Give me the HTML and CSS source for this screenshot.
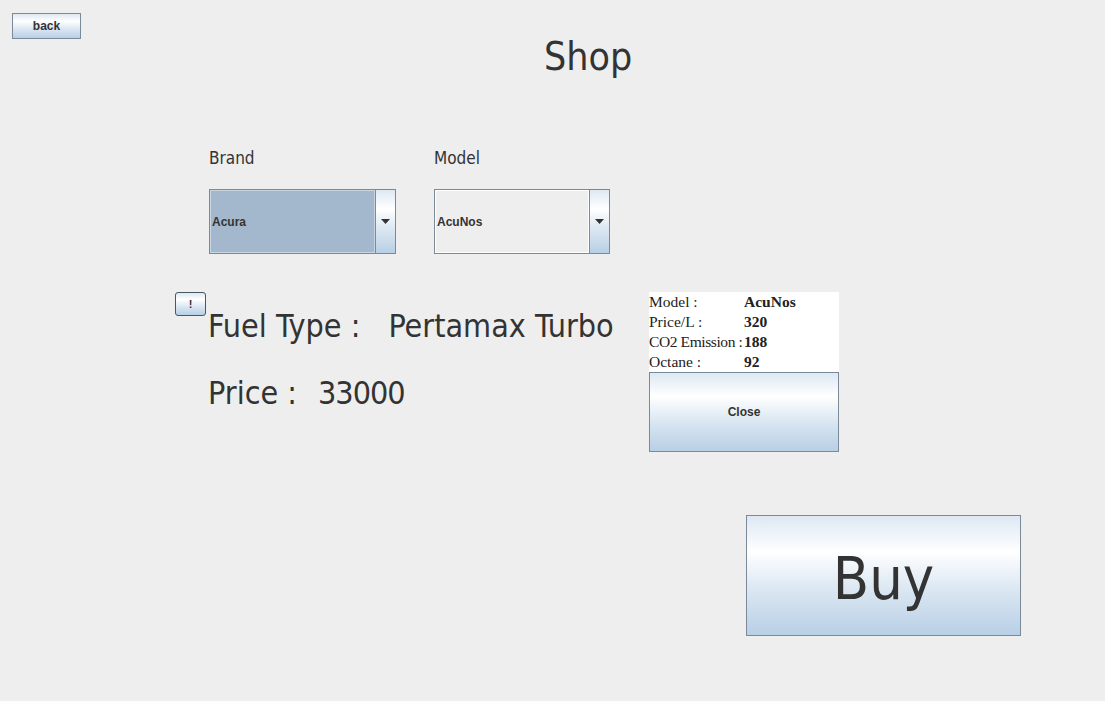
FILE: index.html
```html
<!DOCTYPE html>
<html lang="en">
<head>
<meta charset="utf-8">
<title>Shop</title>
<link rel="stylesheet" href="styles.css">
</head>
<body>
<div class="app">
  <div class="top-row">
    <button class="btn back">back</button>
  </div>
  <h1 class="title">Shop</h1>

  <div class="selectors">
    <div class="field field-brand">
      <div class="label">Brand</div>
      <div class="combo selected">
        <div class="combo-value">Acura</div>
        <div class="combo-arrow">
          <svg width="9" height="5" viewBox="0 0 9 5"><polygon points="0,0 9,0 4.5,5" fill="#333"/></svg>
        </div>
      </div>
    </div>
    <div class="field field-model">
      <div class="label">Model</div>
      <div class="combo">
        <div class="combo-value">AcuNos</div>
        <div class="combo-arrow">
          <svg width="9" height="5" viewBox="0 0 9 5"><polygon points="0,0 9,0 4.5,5" fill="#333"/></svg>
        </div>
      </div>
    </div>
  </div>

  <div class="details">
    <button class="btn info">!</button>
    <div class="fuel">
      <div class="fuel-line"><span class="fkey">Fuel Type :</span><span class="fval fval-type">Pertamax Turbo</span></div>
      <div class="fuel-line"><span class="fkey">Price :</span><span class="fval fval-price">33000</span></div>
    </div>
    <div class="panel">
      <div class="panel-rows">
        <div class="prow"><span class="pkey">Model :</span><span class="pval">AcuNos</span></div>
        <div class="prow"><span class="pkey">Price/L :</span><span class="pval">320</span></div>
        <div class="prow"><span class="pkey pkey-tight">CO2 Emission :</span><span class="pval">188</span></div>
        <div class="prow"><span class="pkey">Octane :</span><span class="pval">92</span></div>
      </div>
      <button class="btn close">Close</button>
    </div>
  </div>

  <div class="buy-row">
    <button class="btn buy">Buy</button>
  </div>
</div>
</body>
</html>
```

FILE: styles.css
```css
html, body {
  margin: 0;
  padding: 0;
  background: #eeeeee;
}

body {
  width: 1105px;
  height: 701px;
  overflow: hidden;
  font-family: "DejaVu Sans Condensed", "DejaVu Sans", sans-serif;
  color: #333333;
}

.app {
  padding-top: 13px;
}

.btn {
  box-sizing: border-box;
  margin: 0;
  padding: 0;
  border: 1px solid #7a8a99;
  border-radius: 0;
  background: linear-gradient(to bottom, #dde8f3 0%, #ffffff 30%, #dde8f3 60%, #b8cfe5 100%);
  color: #333333;
  font-family: "Liberation Sans", Arial, sans-serif;
  font-weight: bold;
  font-size: 12px;
  cursor: default;
  display: flex;
  align-items: center;
  justify-content: center;
}

.top-row {
  height: 26px;
  padding-left: 12px;
}

.back {
  width: 69px;
  height: 26px;
}

.title {
  margin: -2px 0 0 0;
  padding-left: 544px;
  height: 40px;
  font-size: 39px;
  line-height: 40px;
  font-weight: normal;
}

.selectors {
  display: flex;
  gap: 38px;
  padding-left: 209px;
  margin-top: 71px;
}

.label {
  font-size: 17px;
  line-height: 20px;
  height: 20px;
  margin-bottom: 21px;
}

.combo {
  box-sizing: border-box;
  height: 65px;
  border: 1px solid #7a8a99;
  display: flex;
  background: #eeeeee;
}

.field-brand .combo {
  width: 187px;
}

.field-model .combo {
  width: 176px;
}

.combo-value {
  flex: 1;
  display: flex;
  align-items: center;
  padding-left: 1px;
  border: 1px solid #ffffff;
  font-family: "Liberation Sans", Arial, sans-serif;
  font-weight: bold;
  font-size: 12px;
}

.combo.selected .combo-value {
  background: #a3b8cc;
  border-color: #c8d6e2;
}

.combo-arrow {
  width: 19px;
  border-left: 1px solid #7a8a99;
  background: linear-gradient(to bottom, #dde8f3 0%, #ffffff 30%, #dde8f3 60%, #b8cfe5 100%);
  display: flex;
  align-items: center;
  justify-content: center;
}

.combo-arrow svg {
  display: block;
}

.details {
  display: flex;
  align-items: flex-start;
  padding-left: 175px;
  margin-top: 38px;
  height: 160px;
}

.info {
  width: 31px;
  height: 24px;
  border-color: #4a5660;
  border-radius: 3px;
  font-size: 11px;
}

.fuel {
  box-sizing: border-box;
  width: 443px;
  padding-left: 2px;
  padding-top: 1px;
}

.fuel-line {
  display: flex;
  font-size: 32px;
  line-height: 67px;
  height: 67px;
  white-space: nowrap;
}

.fval-type {
  margin-left: 28px;
}

.fval-price {
  margin-left: 21px;
  letter-spacing: -1px;
}

.panel {
  width: 190px;
}

.panel-rows {
  background: #ffffff;
  height: 80px;
  font-family: "Liberation Serif", "Times New Roman", serif;
  font-size: 15.5px;
  color: #222222;
}

.prow {
  display: flex;
  height: 20px;
  line-height: 20px;
}

.pkey {
  flex: none;
  width: 95px;
  white-space: nowrap;
}

.pkey-tight {
  letter-spacing: -0.4px;
}

.pval {
  font-weight: bold;
}

.close {
  width: 190px;
  height: 80px;
}

.buy-row {
  padding-left: 746px;
  margin-top: 63px;
}

.buy {
  width: 275px;
  height: 121px;
  font-family: "DejaVu Sans Condensed", "DejaVu Sans", sans-serif;
  font-weight: normal;
  font-size: 59px;
  padding-top: 6px;
}
```
